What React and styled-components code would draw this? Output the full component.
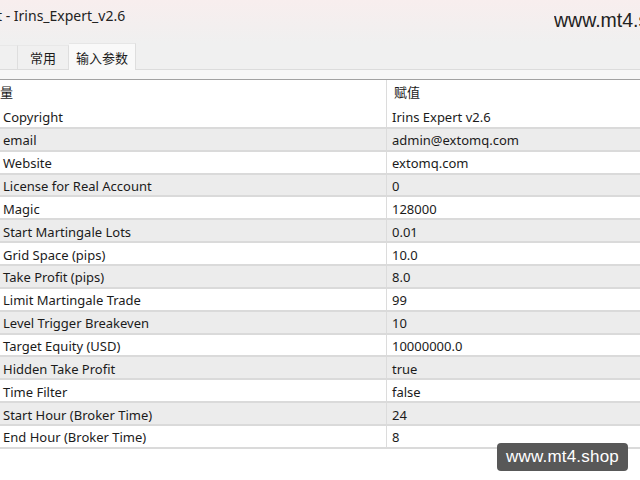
import React from "react";
import styled, { createGlobalStyle } from "styled-components";

const GlobalStyle = createGlobalStyle`
  html, body {
    margin: 0;
    padding: 0;
    background: #ffffff;
    font-family: "Noto Sans", "Noto Sans CJK SC", sans-serif;
    color: #1b1b1b;
  }
`;

const Window = styled.div`
  width: 640px;
  height: 480px;
  overflow: hidden;
  background: #ffffff;
  position: relative;
`;

const TitleBar = styled.div`
  height: 43px;
  display: flex;
  justify-content: space-between;
  align-items: flex-start;
  background: linear-gradient(180deg, #f8eeee 0%, #f3efef 60%, #f0f0f0 100%);
  overflow: hidden;
`;

const Title = styled.div`
  margin: 6px 0 0 -3px;
  font-size: 14px;
  color: #222;
  white-space: nowrap;
`;

const Site = styled.div`
  width: 86px;
  margin-top: 9px;
  font-family: "Liberation Sans", Arial, sans-serif;
  font-size: 19.5px;
  color: #222;
  white-space: nowrap;
  overflow: hidden;
`;

const TabStrip = styled.div`
  height: 26px;
  display: flex;
  align-items: flex-end;
  background: #f0f0f0;
  border-bottom: 1px solid #dcdcdc;
`;

const Tab = styled.div`
  box-sizing: border-box;
  width: ${(p) => p.$w}px;
  height: ${(p) => (p.$active ? 27 : 24)}px;
  margin-bottom: ${(p) => (p.$active ? -1 : 0)}px;
  display: flex;
  align-items: center;
  justify-content: center;
  font-size: 13px;
  color: #1b1b1b;
  background: ${(p) => (p.$active ? "#f9f9f9" : "#f0f0f0")};
  border-right: 1px solid #dedede;
  border-top: 1px solid ${(p) => (p.$active ? "#e6e6e6" : "#e8e8e8")};
`;

const Gap = styled.div`
  height: 9px;
  background: #f7f7f7;
  border-bottom: 1px solid #a2a2a2;
`;

const Table = styled.div`
  display: flex;
  flex-direction: column;
`;

const Row = styled.div`
  box-sizing: border-box;
  display: grid;
  grid-template-columns: 387px 1fr;
  height: ${(p) => (p.$header ? 26 : 22.86)}px;
  background: ${(p) => (p.$gray ? "#ececec" : "#ffffff")};
  border-bottom: ${(p) => (p.$header ? "none" : "2px solid #dadada")};
  font-size: 13px;
`;

const Cell = styled.div`
  display: flex;
  align-items: center;
  padding-left: ${(p) => (p.$value ? 5 : 3)}px;
  padding-top: 2px;
  border-right: ${(p) => (p.$value ? "none" : "1px solid #dcdcdc")};
  white-space: nowrap;
  overflow: hidden;
`;

const HeadCell = styled(Cell)`
  padding-left: ${(p) => (p.$value ? 7 : 0)}px;
  padding-top: 0;
  padding-bottom: 3px;
`;

const Watermark = styled.div`
  position: absolute;
  left: 497px;
  top: 443px;
  width: 131px;
  height: 28px;
  border-radius: 4px;
  background: #585858;
  color: #ffffff;
  font-family: "Liberation Sans", Arial, sans-serif;
  font-size: 17px;
  display: flex;
  align-items: center;
  justify-content: center;
  letter-spacing: 0.2px;
`;

const params = [
  ["Copyright", "Irins Expert v2.6"],
  ["email", "admin@extomq.com"],
  ["Website", "extomq.com"],
  ["License for Real Account", "0"],
  ["Magic", "128000"],
  ["Start Martingale Lots", "0.01"],
  ["Grid Space (pips)", "10.0"],
  ["Take Profit (pips)", "8.0"],
  ["Limit Martingale Trade", "99"],
  ["Level Trigger Breakeven", "10"],
  ["Target Equity (USD)", "10000000.0"],
  ["Hidden Take Profit", "true"],
  ["Time Filter", "false"],
  ["Start Hour (Broker Time)", "24"],
  ["End Hour (Broker Time)", "8"],
];

export default function App() {
  return (
    <Window>
      <GlobalStyle />
      <TitleBar>
        <Title>t - Irins_Expert_v2.6</Title>
        <Site>www.mt4.shop</Site>
      </TitleBar>
      <TabStrip>
        <Tab $w={18}></Tab>
        <Tab $w={51}>常用</Tab>
        <Tab $w={67} $active>
          输入参数
        </Tab>
      </TabStrip>
      <Gap />
      <Table>
        <Row $header>
          <HeadCell>量</HeadCell>
          <HeadCell $value>赋值</HeadCell>
        </Row>
        {params.map(([name, value], i) => (
          <Row key={name} $gray={i % 2 === 1}>
            <Cell>{name}</Cell>
            <Cell $value>{value}</Cell>
          </Row>
        ))}
      </Table>
      <Watermark>www.mt4.shop</Watermark>
    </Window>
  );
}
